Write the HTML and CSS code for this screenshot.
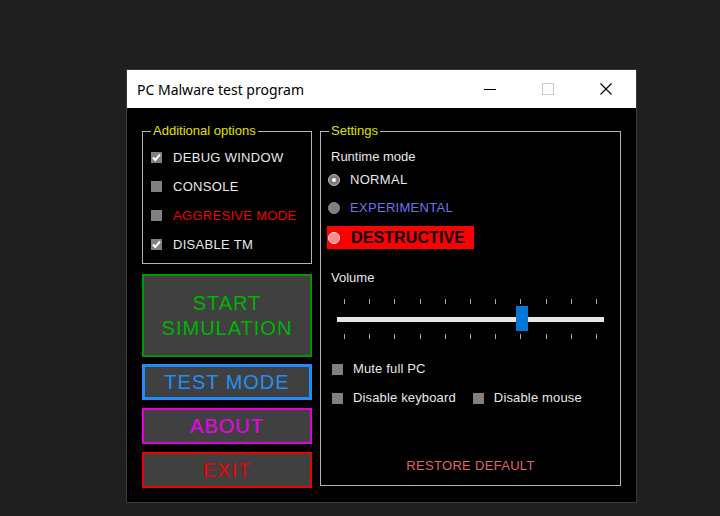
FILE: index.html
```html
<!DOCTYPE html>
<html lang="en">
<head>
<meta charset="utf-8">
<title>PC Malware test program</title>
<link rel="stylesheet" href="styles.css">
</head>
<body>
<div class="window">
  <div class="titlebar">
    <span class="title">PC Malware test program</span>
    <div class="controls">
      <svg class="ctl" width="12" height="12" viewBox="0 0 12 12"><line x1="0" y1="6.5" x2="12" y2="6.5" stroke="#000" stroke-width="1"/></svg>
      <svg class="ctl" width="12" height="12" viewBox="0 0 12 12"><rect x="0.5" y="0.5" width="11" height="11" fill="none" stroke="#cccccc" stroke-width="1"/></svg>
      <svg class="ctl" width="12" height="12" viewBox="0 0 12 12"><path d="M0.5 0.5 L11.5 11.5 M11.5 0.5 L0.5 11.5" stroke="#000" stroke-width="1.1" fill="none"/></svg>
    </div>
  </div>
  <div class="client">
    <div class="left-col">
      <fieldset class="group opts">
        <legend>Additional options</legend>
        <div class="opt-rows">
          <div class="check-row"><span class="box"><svg width="11" height="11" viewBox="0 0 11 11"><path d="M2 5.5 L4.3 8 L9 2.5" stroke="#fff" stroke-width="2" fill="none"/></svg></span><span class="caps">DEBUG WINDOW</span></div>
          <div class="check-row"><span class="box"></span><span class="caps">CONSOLE</span></div>
          <div class="check-row"><span class="box"></span><span class="caps red">AGGRESIVE MODE</span></div>
          <div class="check-row"><span class="box"><svg width="11" height="11" viewBox="0 0 11 11"><path d="M2 5.5 L4.3 8 L9 2.5" stroke="#fff" stroke-width="2" fill="none"/></svg></span><span class="caps">DISABLE TM</span></div>
        </div>
      </fieldset>
      <button class="btn start">START<br>SIMULATION</button>
      <button class="btn test">TEST MODE</button>
      <button class="btn about">ABOUT</button>
      <button class="btn exit">EXIT</button>
    </div>
    <fieldset class="group settings">
      <legend>Settings</legend>
      <div class="set-body">
        <div class="label rt">Runtime mode</div>
        <div class="radio-row normal">
          <svg width="12" height="12" viewBox="0 0 12 12"><circle cx="6" cy="6" r="5.5" fill="#7a7a7a" stroke="#b8b8b8" stroke-width="1"/><circle cx="6" cy="6" r="2" fill="#fff"/></svg>
          <span class="caps">NORMAL</span>
        </div>
        <div class="radio-row exp">
          <svg width="12" height="12" viewBox="0 0 12 12"><circle cx="6" cy="6" r="5.5" fill="#808080" stroke="#8a8a8a" stroke-width="1"/></svg>
          <span class="caps">EXPERIMENTAL</span>
        </div>
        <div class="radio-row destr">
          <svg width="12" height="12" viewBox="0 0 12 12"><circle cx="6" cy="6" r="5.5" fill="#ff8c8c" stroke="#ffe0e0" stroke-width="1"/></svg>
          <span>DESTRUCTIVE</span>
        </div>
        <div class="label vol">Volume</div>
        <div class="slider">
          <div class="ticks"><i></i><i></i><i></i><i></i><i></i><i></i><i></i><i></i><i></i><i></i><i></i></div>
          <div class="track-zone">
            <div class="track"></div>
            <div class="thumb"></div>
          </div>
          <div class="ticks"><i></i><i></i><i></i><i></i><i></i><i></i><i></i><i></i><i></i><i></i><i></i></div>
        </div>
        <div class="cb-row mute"><span class="box"></span><span>Mute full PC</span></div>
        <div class="cb-row dis">
          <span class="cb-item"><span class="box"></span><span>Disable keyboard</span></span>
          <span class="cb-item"><span class="box"></span><span>Disable mouse</span></span>
        </div>
        <div class="restore">RESTORE DEFAULT</div>
      </div>
    </fieldset>
  </div>
</div>
</body>
</html>
```
FILE: styles.css
```css
html, body {
  margin: 0;
  padding: 0;
}
body {
  background: #1f1f1f;
  width: 720px;
  height: 516px;
  overflow: hidden;
  font-family: "Liberation Sans", Arial, sans-serif;
}
.window {
  margin: 69px 0 0 126px;
  width: 509px;
  height: 432px;
  border: 1px solid #3a3a3a;
  background: #000;
  display: flex;
  flex-direction: column;
}
.titlebar {
  height: 38px;
  flex: none;
  background: #fff;
  display: flex;
  align-items: center;
  padding-left: 10px;
}
.title {
  flex: 1;
  font-family: "Noto Sans", "Open Sans", sans-serif;
  font-size: 14px;
  color: #000;
}
.controls {
  display: flex;
  gap: 46px;
  margin-right: 24px;
}
.ctl {
  display: block;
}
.client {
  flex: 1;
  display: grid;
  grid-template-columns: 170px 301px;
  column-gap: 8px;
  align-items: start;
  padding: 15px 0 0 15px;
}
.left-col {
  display: flex;
  flex-direction: column;
}
.group {
  margin: 0;
  padding: 0;
  min-width: 0;
  border: 1px solid #b4b4b4;
}
.group legend {
  margin-left: 8px;
  padding: 0 2px;
  font-size: 13px;
  line-height: 16px;
  color: #e0e000;
}
.opt-rows {
  padding: 4px 0 4px 8px;
}
.check-row {
  height: 29px;
  display: flex;
  align-items: center;
  gap: 11px;
}
.box {
  width: 11px;
  height: 11px;
  flex: none;
  background: #808080;
  display: flex;
}
.caps {
  letter-spacing: 0.3px;
}
.check-row span:last-child,
.label,
.radio-row,
.cb-row {
  font-size: 13px;
  line-height: 16px;
  color: #e8e8e8;
}
.cb-row {
  letter-spacing: 0.15px;
}
.red {
  color: #f00000 !important;
}
.btn {
  box-sizing: border-box;
  width: 170px;
  height: 36px;
  padding: 0;
  background: #404040;
  border: 2px solid;
  font-family: "Liberation Sans", Arial, sans-serif;
  font-size: 20px;
  line-height: 25px;
  letter-spacing: 1px;
  text-align: center;
  display: flex;
  align-items: center;
  justify-content: center;
}
.start {
  height: 83px;
  margin-top: 10px;
  color: #00b400;
  border-color: #009800;
}
.test {
  margin-top: 7px;
  color: #2090f8;
  border: 3px solid #1e8cff;
}
.about {
  margin-top: 8px;
  color: #f000f0;
  border-color: #e000e0;
}
.exit {
  margin-top: 8px;
  color: #f00000;
  border-color: #f00000;
}
.settings {
  box-sizing: border-box;
  height: 363px;
}
.set-body {
  padding-left: 6px;
  display: flex;
  flex-direction: column;
  align-items: flex-start;
}
.label {
  margin-left: 4px;
}
.rt {
  margin-top: 10px;
}
.radio-row {
  height: 20px;
  display: flex;
  align-items: center;
  gap: 10px;
  padding-left: 1px;
}
.radio-row svg {
  display: block;
  flex: none;
}
.normal {
  margin-top: 5px;
}
.exp {
  margin-top: 8px;
  color: #7070f0;
}
.destr {
  box-sizing: border-box;
  margin-top: 8px;
  height: 23px;
  width: 147px;
  background: #ff0000;
  gap: 11px;
  color: #000;
  font-weight: bold;
  font-size: 16px;
  letter-spacing: 0.1px;
}
.vol {
  margin-top: 21px;
}
.slider {
  margin-top: 13px;
  margin-left: 10px;
  width: 267px;
}
.ticks {
  margin-left: 7px;
  width: 253px;
  height: 5px;
  display: flex;
  justify-content: space-between;
}
.ticks i {
  width: 1px;
  height: 5px;
  background: #a8a8a8;
}
.track-zone {
  position: relative;
  box-sizing: border-box;
  height: 30px;
  padding-top: 13px;
}
.track {
  height: 5px;
  background: #e6e6e6;
}
.thumb {
  position: absolute;
  left: 179px;
  top: 2px;
  width: 12px;
  height: 25px;
  background: #0078d7;
}
.cb-row {
  display: flex;
  align-items: center;
  height: 16px;
  gap: 10px;
  padding-left: 5px;
}
.cb-item {
  display: flex;
  align-items: center;
  gap: 10px;
}
.mute {
  margin-top: 22px;
}
.dis {
  margin-top: 13px;
  gap: 17px;
}
.restore {
  align-self: stretch;
  margin: 52px 0 0 -6px;
  text-align: center;
  font-size: 13px;
  line-height: 16px;
  letter-spacing: 0.3px;
  color: #e06464;
}
```
